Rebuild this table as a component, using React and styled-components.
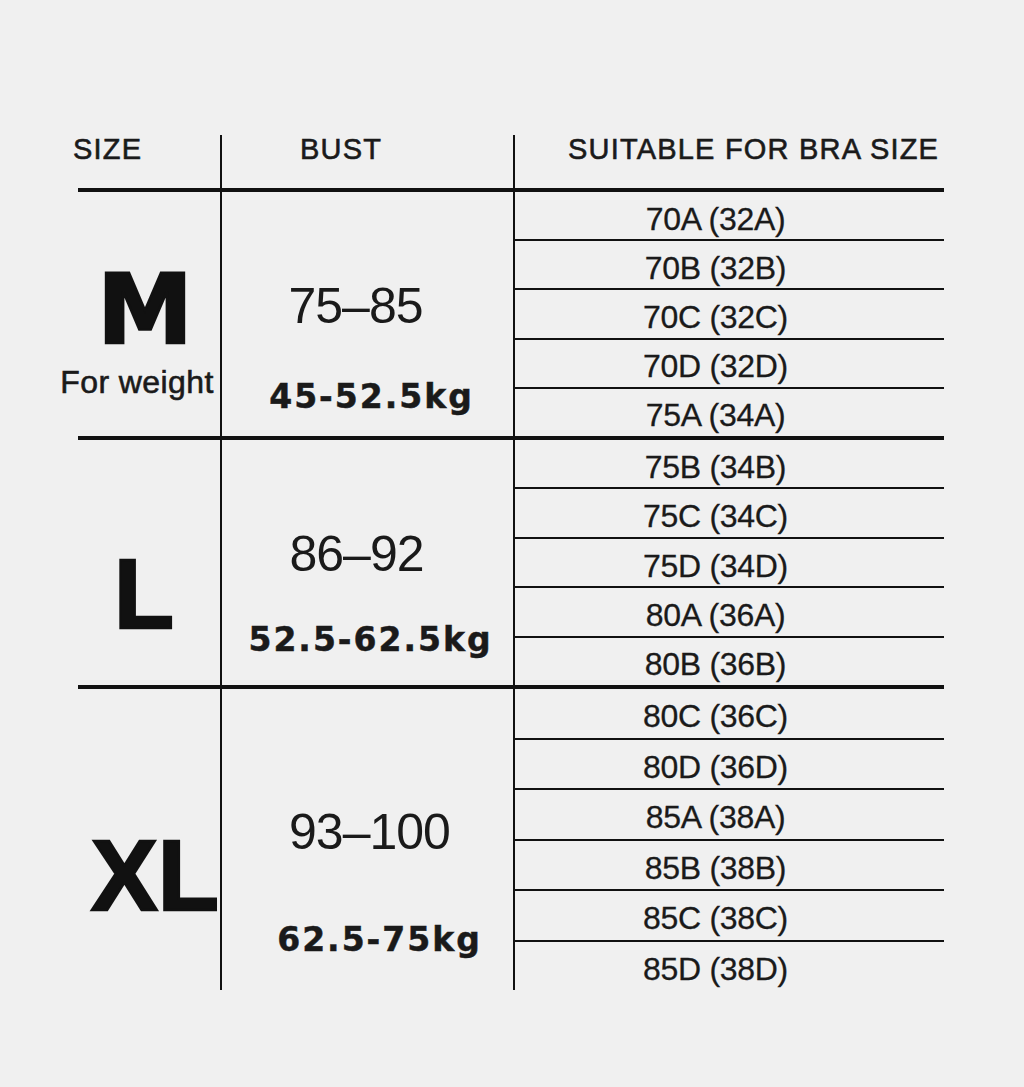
import React from 'react'
import styled, { createGlobalStyle } from 'styled-components'

const sections = [
  {
    size: 'M',
    wide: true,
    letterSize: 96,
    note: 'For weight',
    sizeTop: 70,
    sizePad: [0, 24],
    nudge: 16,
    bust: '75–85',
    bustTop: 89,
    bustDx: -12,
    weight: '45-52.5kg',
    weightGap: 49,
    weightDx: 4,
    height: 244,
    bras: ['70A (32A)', '70B (32B)', '70C (32C)', '70D (32D)', '75A (34A)']
  },
  {
    size: 'L',
    letterSize: 98,
    sizeTop: 105,
    sizePad: [0, 10],
    bust: '86–92',
    bustTop: 89,
    bustDx: -11,
    weight: '52.5-62.5kg',
    weightGap: 44,
    weightDx: 3,
    height: 245,
    bras: ['75B (34B)', '75C (34C)', '75D (34D)', '80A (36A)', '80B (36B)']
  },
  {
    size: 'XL',
    letterSize: 100,
    sizeTop: 136,
    sizePad: [12, 0],
    bust: '93–100',
    bustTop: 118,
    bustDx: 2,
    weight: '62.5-75kg',
    weightGap: 66,
    weightDx: 12,
    height: 301,
    last: true,
    bras: [
      '80C (36C)',
      '80D (36D)',
      '85A (38A)',
      '85B (38B)',
      '85C (38C)',
      '85D (38D)'
    ]
  }
]

export default function App() {
  return (
    <>
      <GlobalStyle />
      <Page>
        <Table>
          <HeaderRow>
            <HeadCell $indent={-5}>SIZE</HeadCell>
            <HeadCell $indent={78}>BUST</HeadCell>
            <HeadCell $indent={53} $last>
              SUITABLE FOR BRA SIZE
            </HeadCell>
          </HeaderRow>
          {sections.map(s => (
            <Section key={s.size} $h={s.height} $last={s.last}>
              <SizeCell $top={s.sizeTop} $left={s.sizePad[0]} $right={s.sizePad[1]}>
                <SizeLetter $wide={s.wide} $size={s.letterSize} $nudge={s.nudge || 0}>
                  {s.size}
                </SizeLetter>
                {s.note && <WeightNote>{s.note}</WeightNote>}
              </SizeCell>
              <BustCell $top={s.bustTop}>
                <BustRange $dx={s.bustDx}>{s.bust}</BustRange>
                <WeightRange $gap={s.weightGap} $dx={s.weightDx}>
                  {s.weight}
                </WeightRange>
              </BustCell>
              <BraList>
                {s.bras.map(b => (
                  <BraRow key={b}>{b}</BraRow>
                ))}
              </BraList>
            </Section>
          ))}
        </Table>
      </Page>
    </>
  )
}

const shift = dx => `
  margin-left: ${dx > 0 ? dx * 2 : 0}px;
  margin-right: ${dx < 0 ? -dx * 2 : 0}px;
`

const GlobalStyle = createGlobalStyle`
  *, *::before, *::after {
    box-sizing: border-box;
  }
  html, body {
    margin: 0;
    background: #f0f0f0;
  }
  body {
    font-family: "Liberation Sans", Arial, sans-serif;
    color: #1a1a1a;
  }
`

const Page = styled.main`
  min-height: 1087px;
  padding: 135px 0 0 78px;
`

const Table = styled.div`
  width: 866px;
  display: flex;
  flex-direction: column;
`

const HeaderRow = styled.div`
  display: grid;
  grid-template-columns: 144px 293px 429px;
  height: 57px;
  border-bottom: 4px solid #111;
`

const HeadCell = styled.div`
  font-size: 29px;
  line-height: 29px;
  letter-spacing: 1.2px;
  text-indent: ${p => p.$indent}px;
  white-space: nowrap;
  -webkit-text-stroke: 0.6px #1a1a1a;
  border-right: ${p => (p.$last ? 'none' : '2px solid #111')};
`

const Section = styled.div`
  display: grid;
  grid-template-columns: 144px 293px 429px;
  height: ${p => p.$h + (p.$last ? 0 : 4)}px;
  border-bottom: ${p => (p.$last ? 'none' : '4px solid #111')};
`

const SizeCell = styled.div`
  display: flex;
  flex-direction: column;
  align-items: center;
  padding: ${p => p.$top}px ${p => p.$right}px 0 ${p => p.$left}px;
  border-right: 2px solid #111;
`

const SizeLetter = styled.div`
  font-family: ${p => (p.$wide ? '"DejaVu Sans"' : '"Liberation Sans"')}, sans-serif;
  font-weight: 700;
  font-size: ${p => p.$size}px;
  line-height: 1;
  margin-left: ${p => p.$nudge}px;
  color: #111;
  -webkit-text-stroke: 2.5px #111;
`

const WeightNote = styled.div`
  font-size: 32px;
  line-height: 1;
  letter-spacing: 0.4px;
  margin-top: 8px;
  white-space: nowrap;
  -webkit-text-stroke: 0.6px #1a1a1a;
`

const BustCell = styled.div`
  display: flex;
  flex-direction: column;
  align-items: center;
  padding-top: ${p => p.$top}px;
  border-right: 2px solid #111;
`

const BustRange = styled.div`
  font-size: 50px;
  line-height: 1;
  letter-spacing: -1px;
  white-space: nowrap;
  ${p => shift(p.$dx)}
`

const WeightRange = styled.div`
  font-family: "DejaVu Sans", sans-serif;
  font-weight: 700;
  font-size: 33px;
  line-height: 1;
  letter-spacing: 2px;
  white-space: nowrap;
  margin-top: ${p => p.$gap}px;
  -webkit-text-stroke: 0.5px #1a1a1a;
  ${p => shift(p.$dx)}
`

const BraList = styled.div`
  display: flex;
  flex-direction: column;
`

const BraRow = styled.div`
  flex: 1;
  display: flex;
  align-items: center;
  justify-content: center;
  padding: 7px 28px 0 0;
  font-size: 32px;
  letter-spacing: -0.3px;
  white-space: nowrap;
  border-bottom: 2px solid #111;
  -webkit-text-stroke: 0.3px #1a1a1a;

  &:last-child {
    border-bottom: none;
  }
`
